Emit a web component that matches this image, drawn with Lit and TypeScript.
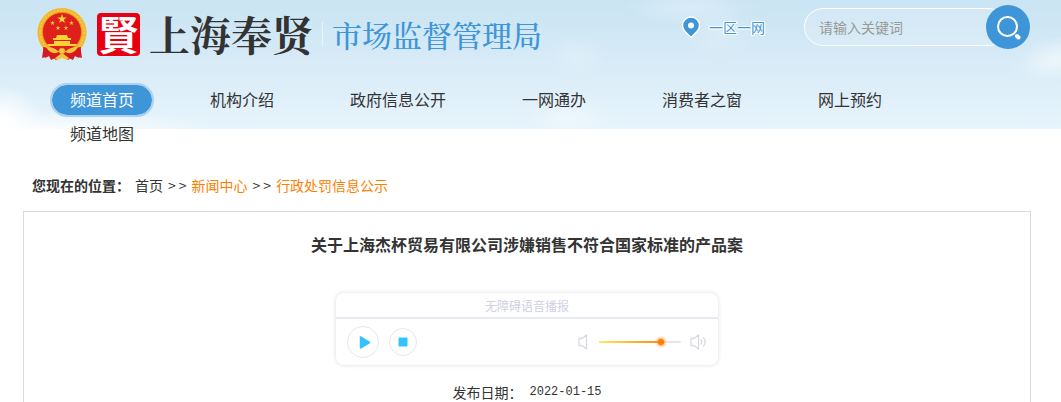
import { LitElement, html, css, svg } from "lit";
import { customElement, state } from "lit/decorators.js";

const star = (cx: number, cy: number, r: number) => {
  const points = Array.from({ length: 10 }, (_, i) => {
    const a = (Math.PI * i) / 5 - Math.PI / 2;
    const d = i % 2 ? r * 0.4 : r;
    return `${(cx + d * Math.cos(a)).toFixed(2)},${(cy + d * Math.sin(a)).toFixed(2)}`;
  }).join(" ");
  return svg`<polygon points=${points} fill="#fbd233"/>`;
};

@customElement("site-header")
class SiteHeader extends LitElement {
  static styles = css`
    :host {
      display: block;
      padding: 5px 31px 0 37px;
      background:
        radial-gradient(ellipse 44px 36px at 0 122px, #fffffff2 20%, #ffffff00 100%),
        radial-gradient(ellipse 170px 20px at 50px 129px, #ffffffcc, #ffffff00 100%),
        radial-gradient(ellipse 40px 22px at 1061px 58px, #ffffff70 20%, #ffffff00 100%),
        radial-gradient(ellipse 32px 18px at 1040px 68px, #ffffff38, #ffffff00 100%),
        radial-gradient(ellipse 70px 20px at 690px 6px, #ffffff48, #ffffff00 100%),
        radial-gradient(ellipse 34px 28px at 720px 34px, #ffffff30, #ffffff00 100%),
        radial-gradient(ellipse 30px 22px at 577px 57px, #ffffff38, #ffffff00 100%),
        radial-gradient(ellipse 44px 24px at 570px 116px, #ffffff50, #ffffff00 100%),
        linear-gradient(#c9e4f3, #d8ebf7 50%, #e7f4fc);
      background-size: 100% 129px;
      background-repeat: no-repeat;
    }
    .top { display: flex; align-items: flex-start; height: 78px; }
    .brand { display: flex; align-items: center; height: 58px; color: inherit; text-decoration: none; }
    .emblem { display: block; width: 50px; height: 54px; }
    .seal {
      width: 43px; height: 43px; margin: 0 9px 0 10px; border-radius: 4px;
      background: #e60012; color: #fff; text-align: center;
      font: 700 40px/41px "Noto Sans CJK TC", sans-serif;
    }
    .city { font: 700 41px/58px "Noto Serif CJK SC", "Noto Sans CJK SC", serif; color: #333; }
    .bureau {
      margin-left: 9px; padding-left: 9px; border-left: 1px solid #e9f5fc;
      font: 500 30px/24px "Noto Serif CJK SC", "Noto Sans CJK SC", serif; color: #3e95d8;
    }
    .district {
      display: flex; align-items: center; gap: 8px; margin: 10px 39px 0 auto;
      color: #3e95d8; text-decoration: none; font-size: 14px; line-height: 22px;
      text-shadow: 1px 0 #fff, -1px 0 #fff, 0 1px #fff, 0 -1px #fff, 1px 1px #fff, -1px -1px #fff, 1px -1px #fff, -1px 1px #fff;
    }
    .pin { display: block; width: 20px; height: 24px; }
    .search { display: flex; align-items: center; height: 44px; }
    .search input {
      box-sizing: border-box; width: 204px; height: 38px; margin: 0 -22px 0 0; padding: 0 30px 0 14px;
      border: 1px solid #fff; border-radius: 19px; outline: 0; background: #ffffff26;
      font: inherit; font-size: 14px; color: #333;
    }
    .search input::placeholder { color: #999; opacity: 1; }
    .search button {
      width: 44px; height: 44px; padding: 0; border: 0; border-radius: 50%;
      background: #3e95d8; z-index: 1; cursor: pointer;
    }
    .search svg { display: block; width: 44px; height: 44px; }
    .nav { display: flex; flex-wrap: wrap; column-gap: 36px; margin-left: 13px; }
    .nav a {
      box-sizing: border-box; height: 34px; padding: 0 18px; border: 2px solid transparent;
      border-radius: 17px; background-clip: padding-box;
      color: #333; font-size: 16px; line-height: 28px; text-decoration: none;
    }
    .nav .active { color: #fff; background-color: #3e95d8; border-color: #abd1ee; }
  `;

  @state() private items = ["频道首页", "机构介绍", "政府信息公开", "一网通办", "消费者之窗", "网上预约", "频道地图"];

  render() {
    return html`
      <div class="top">
        <a class="brand" href="#">
          <svg class="emblem" viewBox="0 0 50 54" aria-hidden="true">
            <path d="M7 37 5 51l7-2 2 4 11-5 11 5 2-4 7 2-2-14z" fill="#d71920"/>
            <circle cx="25" cy="25.500" r="24.500" fill="#f3b72d"/>
            <circle cx="25" cy="25.500" r="22" fill="none" stroke="#f8c93f" stroke-width="2" stroke-dasharray="2 1.500"/>
            <circle cx="25" cy="25" r="19.500" fill="#df211d" stroke="#e29b22" stroke-width=".7"/>
            ${star(25, 12, 5)}${star(15.5, 16, 2.4)}${star(34.5, 16, 2.4)}${star(21, 21, 2.4)}${star(29, 21, 2.4)}
            <path d="M20 28h10l1 3h3v2H16v-2h3zM17 34h16v3H17zM10 37h30l-1.500 2h-27z" fill="#fbd233"/>
            <path d="M6 40q10 1 13 4 6-5 12 0 3-3 13-4l-2 11-6-3-5 5-6-3-6 3-5-5-6 3z" fill="#d71920"/>
            <path d="M9 40q8 0 12 4l4-2 4 2q4-4 12-4-4 7-10 6l-6-2-6 2q-6 1-10-6zM18 51l7-5 7 5-2 2-5-2-5 2z" fill="#f6c33c"/>
            <circle cx="25" cy="44" r="3" fill="#f8c93f" stroke="#d98b1b" stroke-width=".5"/>
          </svg>
          <span class="seal">賢</span>
          <span class="city">上海奉贤</span>
          <span class="bureau">市场监督管理局</span>
        </a>
        <a class="district" href="#">
          <svg class="pin" viewBox="0 0 20 24" aria-hidden="true">
            <path d="M10 22.500 4 16.500a8.500 8.500 0 1 1 12 0z" fill="#3e95d8" stroke="#fff" stroke-width="1.500"/>
            <circle cx="10" cy="10.500" r="3" fill="#fff"/>
          </svg>
          <span>一区一网</span>
        </a>
        <form class="search" role="search" @submit=${(e: Event) => e.preventDefault()}>
          <input type="text" aria-label="请输入关键词" placeholder="请输入关键词" />
          <button type="submit" aria-label="搜索">
            <svg viewBox="0 0 44 44" fill="none" stroke="#fff" stroke-linecap="round">
              <circle cx="21.500" cy="21.500" r="9.500" stroke-width="2"/>
              <path d="m31 31 1.500 1.500" stroke-width="4"/>
            </svg>
          </button>
        </form>
      </div>
      <nav class="nav">
        ${this.items.map((t, i) => html`<a href="#" class=${i === 0 ? "active" : ""}>${t}</a>`)}
      </nav>
    `;
  }
}

@customElement("voice-player")
class VoicePlayer extends LitElement {
  static styles = css`
    :host {
      display: block; width: 382px; max-width: 100%; border-radius: 8px; background: #fff;
      box-shadow: 0 0 4px #00000026;
    }
    .caption {
      height: 24px; border-bottom: 2px solid #e8e9f2; color: #d0d1e2;
      font-size: 12px; line-height: 25px; text-align: center;
    }
    .controls { display: flex; align-items: center; height: 46px; padding: 0 11px; }
    button {
      box-sizing: border-box; width: 32px; height: 32px; padding: 0; margin-right: 10px;
      border: 1px solid #e6e6f2; border-radius: 50%; background: #fff; cursor: pointer;
    }
    .stop { width: 28px; height: 28px; }
    button svg { display: block; width: 100%; height: 100%; }
    .speaker { width: 17px; height: 16px; }
    .low { width: 10px; margin-left: auto; }
    input {
      appearance: none; width: 82px; height: 12px; margin: 0 9px 0 11px; background: transparent;
    }
    input::-webkit-slider-runnable-track {
      height: 2px; border-radius: 1px;
      background: linear-gradient(90deg, #ffe95c, #ff8a0c) 0 0 / 62px 2px no-repeat, #e6e6ee;
    }
    input::-webkit-slider-thumb {
      appearance: none; width: 6px; height: 6px; margin-top: -2px; border-radius: 50%;
      background: #ff7d00; box-shadow: 0 0 3px 1px #ff9a3c;
    }
  `;

  render() {
    return html`
      <div class="caption">无障碍语音播报</div>
      <div class="controls">
        <button aria-label="播放">
          <svg viewBox="0 0 30 30"><path d="M12.500 10v11l9-5.500z" fill="#34c3ff" stroke="#34c3ff" stroke-width="1.500" stroke-linejoin="round"/></svg>
        </button>
        <button class="stop" aria-label="停止">
          <svg viewBox="0 0 26 26"><rect x="8.500" y="8.500" width="9" height="9" rx="1" fill="#34c3ff"/></svg>
        </button>
        <svg class="speaker low" viewBox="0 0 10 16" fill="none" stroke="#d9d9e0" stroke-width="1.300" stroke-linejoin="round" aria-hidden="true">
          <path d="M1 4.500h3l4.500-3.500v14L4 11.500H1z"/>
        </svg>
        <input type="range" min="0" max="100" value="77" aria-label="音量" />
        <svg class="speaker" viewBox="0 0 17 16" fill="none" stroke="#d9d9e0" stroke-width="1.300" stroke-linejoin="round" stroke-linecap="round" aria-hidden="true">
          <path d="M1 4.500h3L8.500 1v14L4 11.500H1zM11 6q1.500 2 0 4M13.500 4q3.500 4 0 8"/>
        </svg>
      </div>
    `;
  }
}

@customElement("app-root")
class AppRoot extends LitElement {
  static styles = css`
    :host {
      display: flex; flex-direction: column; min-height: 100vh; color: #333; background: #fff;
      font-family: "Noto Sans CJK SC", sans-serif; font-size: 14px;
    }
    .crumbs { display: flex; gap: 5px; padding: 24px 32px 0; line-height: 20px; }
    .crumbs a { color: #ff7e00; text-decoration: none; }
    .crumbs .home { color: #333; }
    .sep { display: flex; gap: 3px; }
    .article {
      flex: 1; display: flex; flex-direction: column; align-items: center;
      margin: 16px 30px 0 23px; border: 1px solid #d9d9d9; border-bottom: 0;
    }
    h1 { margin: 20px 0 37px; font-size: 16px; line-height: 24px; }
    .date { display: flex; align-items: center; gap: 7px; margin: 16px 0 0; line-height: 20px; }
    time { font-family: "Liberation Mono", monospace; font-size: 12px; line-height: 22px; }
  `;

  render() {
    const sep = html`<span class="sep"><span>&gt;</span><span>&gt;</span></span>`;
    return html`
      <site-header></site-header>
      <nav class="crumbs">
        <strong>您现在的位置：</strong>
        <a class="home" href="#">首页</a>${sep}<a href="#">新闻中心</a>${sep}<a href="#">行政处罚信息公示</a>
      </nav>
      <main class="article">
        <h1>关于上海杰杯贸易有限公司涉嫌销售不符合国家标准的产品案</h1>
        <voice-player></voice-player>
        <p class="date"><span>发布日期：</span><time datetime="2022-01-15">2022-01-15</time></p>
      </main>
    `;
  }
}
